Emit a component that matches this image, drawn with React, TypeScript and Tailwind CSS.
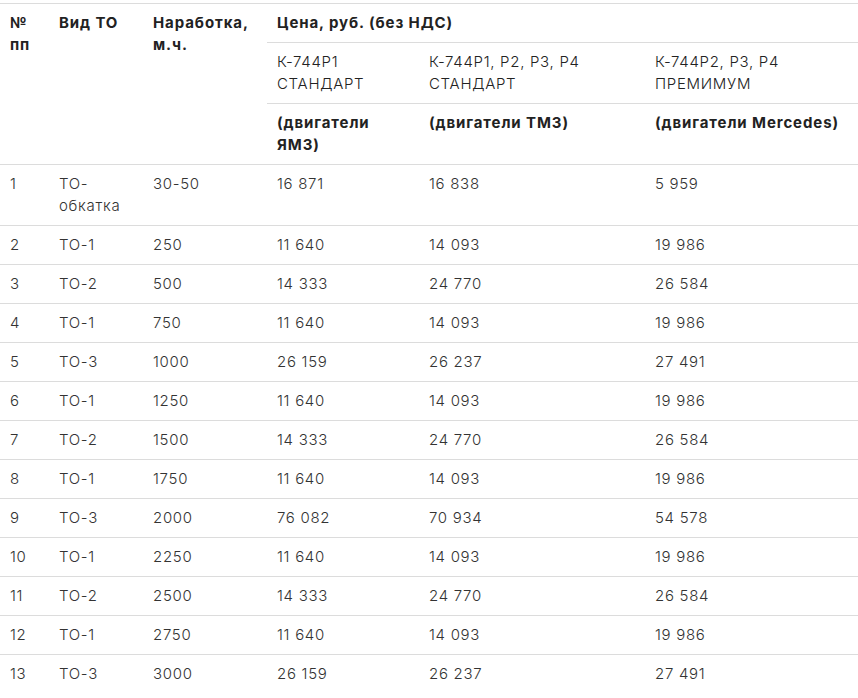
import * as React from "react"

type Row = [string, string, string, string, string, string]

const rows: Row[] = [
  ["1", "ТО-обкатка", "30-50", "16 871", "16 838", "5 959"],
  ["2", "ТО-1", "250", "11 640", "14 093", "19 986"],
  ["3", "ТО-2", "500", "14 333", "24 770", "26 584"],
  ["4", "ТО-1", "750", "11 640", "14 093", "19 986"],
  ["5", "ТО-3", "1000", "26 159", "26 237", "27 491"],
  ["6", "ТО-1", "1250", "11 640", "14 093", "19 986"],
  ["7", "ТО-2", "1500", "14 333", "24 770", "26 584"],
  ["8", "ТО-1", "1750", "11 640", "14 093", "19 986"],
  ["9", "ТО-3", "2000", "76 082", "70 934", "54 578"],
  ["10", "ТО-1", "2250", "11 640", "14 093", "19 986"],
  ["11", "ТО-2", "2500", "14 333", "24 770", "26 584"],
  ["12", "ТО-1", "2750", "11 640", "14 093", "19 986"],
  ["13", "ТО-3", "3000", "26 159", "26 237", "27 491"],
]

const th = "text-left align-top font-bold tracking-[0.9px] px-[10px] py-[8px] border-t border-[#dcdcdc]"
const td = "text-left align-top font-light tracking-[0.7px] px-[10px] py-[8px] border-t border-[#dcdcdc]"

export default function App() {
  return (
    <div
      className="w-[858px] h-[698px] overflow-hidden bg-white pt-[3px] text-[15px] leading-[22px] text-[#333]"
      style={{ fontFamily: "Inter, 'Noto Sans', sans-serif" }}
    >
      <table className="w-[858px] border-collapse table-fixed">
        <colgroup>
          <col className="w-[49px]" />
          <col className="w-[94px]" />
          <col className="w-[124px]" />
          <col className="w-[152px]" />
          <col className="w-[226px]" />
          <col />
        </colgroup>
        <thead className="text-[#222]">
          <tr>
            <th rowSpan={3} className={th}>№ пп</th>
            <th rowSpan={3} className={th}>Вид ТО</th>
            <th rowSpan={3} className={th}>Наработка, м.ч.</th>
            <th colSpan={3} className={th}>Цена, руб. (без НДС)</th>
          </tr>
          <tr>
            <td className={td}>К-744Р1 СТАНДАРТ</td>
            <td className={td}>К-744Р1, Р2, Р3, Р4 СТАНДАРТ</td>
            <td className={td}>К-744Р2, Р3, Р4 ПРЕМИМУМ</td>
          </tr>
          <tr>
            <th className={th}>(двигатели ЯМЗ)</th>
            <th className={th}>(двигатели ТМЗ)</th>
            <th className={th}>(двигатели Mercedes)</th>
          </tr>
        </thead>
        <tbody>
          {rows.map((r) => (
            <tr key={r[0]}>
              {r.map((c, i) => (
                <td key={i} className={td}>{c}</td>
              ))}
            </tr>
          ))}
        </tbody>
      </table>
    </div>
  )
}
